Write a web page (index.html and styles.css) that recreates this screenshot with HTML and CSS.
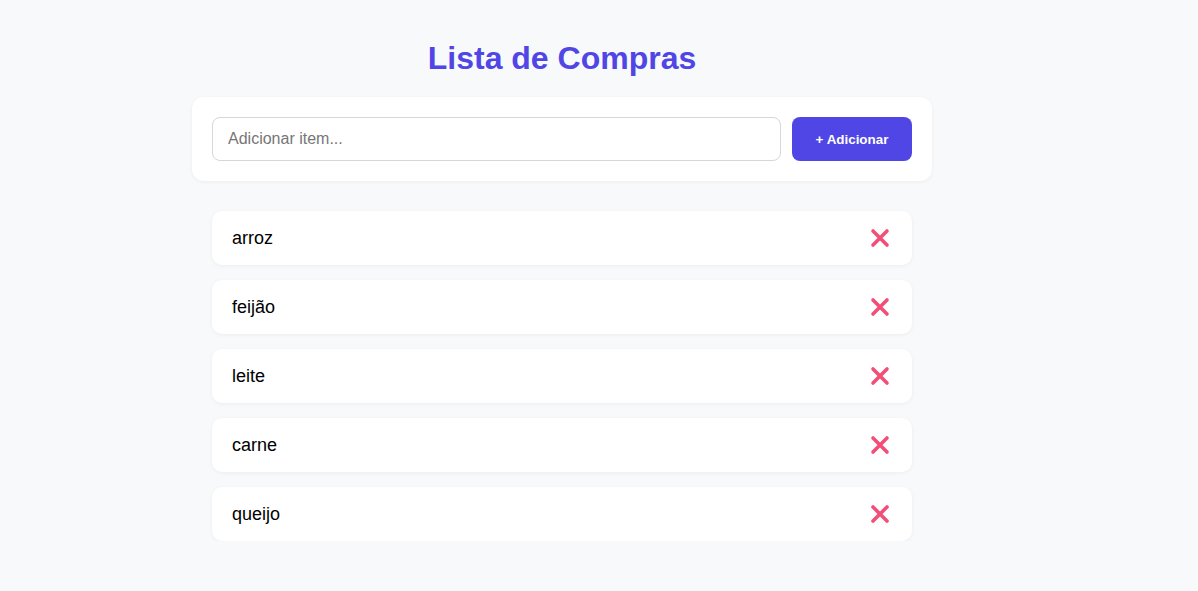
FILE: index.html
```html
<!DOCTYPE html>
<html lang="pt">
<head>
<meta charset="utf-8">
<title>Lista de Compras</title>
<link rel="stylesheet" href="styles.css">
</head>
<body>
<main class="app">
  <h1 class="title">Lista de Compras</h1>
  <form class="add-card">
    <input class="add-input" type="text" placeholder="Adicionar item...">
    <button class="add-btn" type="button">+ Adicionar</button>
  </form>
  <ul class="list">
    <li class="item"><span class="item-name">arroz</span><button class="del" type="button" aria-label="Remover"><svg viewBox="0 0 20 20" width="20" height="20"><path d="M3 3 L17 17 M17 3 L3 17"/></svg></button></li>
    <li class="item"><span class="item-name">feijão</span><button class="del" type="button" aria-label="Remover"><svg viewBox="0 0 20 20" width="20" height="20"><path d="M3 3 L17 17 M17 3 L3 17"/></svg></button></li>
    <li class="item"><span class="item-name">leite</span><button class="del" type="button" aria-label="Remover"><svg viewBox="0 0 20 20" width="20" height="20"><path d="M3 3 L17 17 M17 3 L3 17"/></svg></button></li>
    <li class="item"><span class="item-name">carne</span><button class="del" type="button" aria-label="Remover"><svg viewBox="0 0 20 20" width="20" height="20"><path d="M3 3 L17 17 M17 3 L3 17"/></svg></button></li>
    <li class="item"><span class="item-name">queijo</span><button class="del" type="button" aria-label="Remover"><svg viewBox="0 0 20 20" width="20" height="20"><path d="M3 3 L17 17 M17 3 L3 17"/></svg></button></li>
  </ul>
</main>
</body>
</html>
```
FILE: styles.css
```css
* { box-sizing: border-box; }
html, body { margin: 0; padding: 0; }
body {
  background: #f8f9fb;
  font-family: "Liberation Sans", Arial, sans-serif;
  color: #000;
}
.app {
  width: 740px;
  margin: 0 0 0 192px;
  padding-top: 40px;
}
.title {
  margin: 0 0 20px;
  text-align: center;
  font-size: 32px;
  line-height: 37px;
  font-weight: 700;
  color: #4f46e5;
}
.add-card {
  display: flex;
  gap: 11px;
  background: #fff;
  border-radius: 12px;
  padding: 20px;
  box-shadow: 0 1px 4px rgba(0,0,0,0.05);
  margin: 0 0 30px;
}
.add-input {
  flex: 1;
  height: 44px;
  border: 1px solid #d6d6dc;
  border-radius: 8px;
  padding: 0 15px;
  font-family: inherit;
  font-size: 16px;
  color: #333;
  background: #fff;
  outline: none;
}
.add-input::placeholder { color: #767676; }
.add-btn {
  width: 120px;
  height: 44px;
  border: 0;
  border-radius: 8px;
  background: #4f46e5;
  color: #fff;
  font-family: inherit;
  font-size: 13.4px;
  font-weight: 700;
}
.list {
  list-style: none;
  margin: 0;
  padding: 0 20px;
  display: flex;
  flex-direction: column;
  gap: 15px;
}
.item {
  display: flex;
  align-items: center;
  justify-content: space-between;
  height: 54px;
  background: #fff;
  border-radius: 10px;
  padding: 0 22px 0 20px;
  box-shadow: 0 1px 4px rgba(0,0,0,0.05);
}
.item-name { font-size: 18px; }
.del {
  border: 0;
  background: none;
  padding: 0;
  width: 20px;
  height: 20px;
  display: flex;
}
.del svg path {
  fill: none;
  stroke: #f24e78;
  stroke-width: 3.6;
  stroke-linecap: round;
}
```
